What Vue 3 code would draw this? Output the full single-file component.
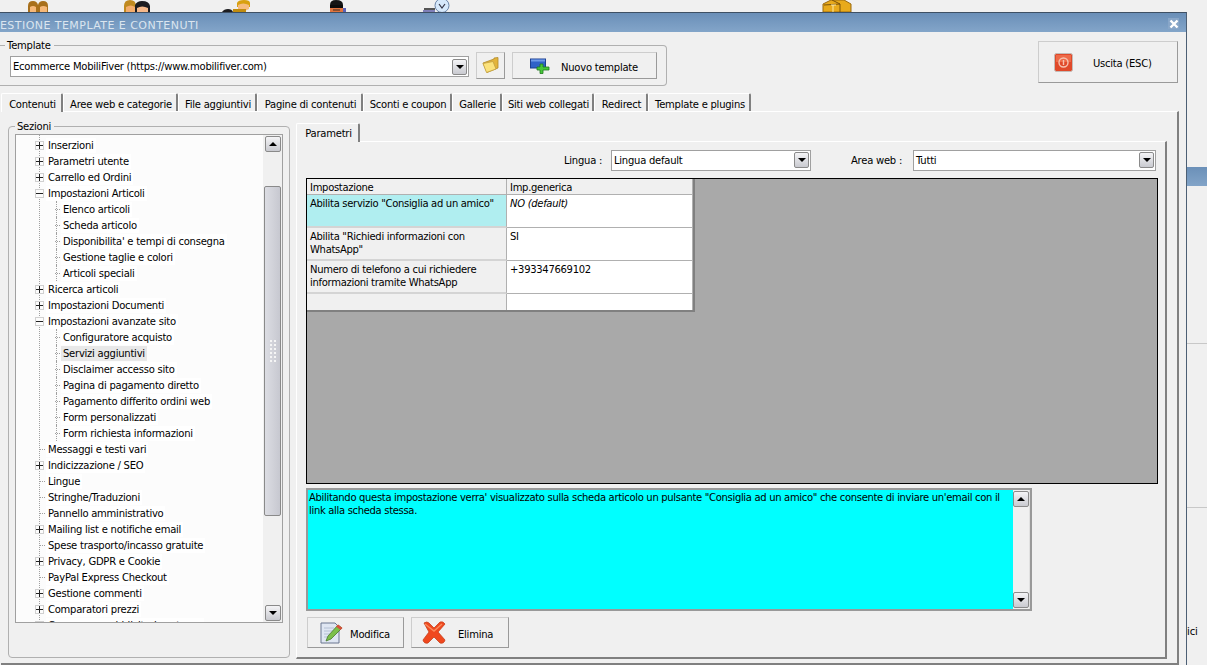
<template>
  <div class="desktop">
    <!-- pezzi dell'applicazione dietro la finestra -->
    <div class="behind-bar"></div>
    <div class="behind-line line-a"></div>
    <div class="behind-line line-b"></div>
    <span class="behind-text">nici</span>

    <svg class="top-icon" style="left:27px" width="22" height="12" viewBox="0 0 22 12">
      <path d="M1 12 V6 Q1 1 6 1 Q10 1 11 5 Q12 1 16 1 Q21 1 21 6 V12 Z" fill="#a8701c" />
      <path d="M3 12 V7 Q6 5 9 7 V12 Z M13 12 V7 Q16 5 20 7 V12 Z" fill="#f6b878" />
    </svg>
    <svg class="top-icon" style="left:124px" width="26" height="12" viewBox="0 0 26 12">
      <path d="M0 12 V6 Q0 0 6 0 Q12 0 12 6 V12 Z" fill="#c08a20" />
      <path d="M2 12 V7 Q7 4 11 7 V12 Z" fill="#f4ad6c" />
      <path d="M11 12 V5 Q13 1 18 1 Q25 1 26 6 V12 Z" fill="#1c1c20" />
      <path d="M13 12 V8 Q18 5 24 8 V12 Z" fill="#f6b88a" />
    </svg>
    <svg class="top-icon" style="left:222px" width="28" height="12" viewBox="0 0 28 12">
      <path d="M15 7 V3 Q16 0 22 0 Q28 0 28 3 V7 Z" fill="#d8a010" />
      <path d="M16 9 V5 Q21 2 27 5 V9 Q22 12 16 9 Z" fill="#f6bc80" />
      <path d="M0 12 Q2 9 6 9 Q10 9 11 12 Z" fill="#1d1d20" />
      <rect x="11" y="9" width="13" height="3" fill="#c08c10" />
    </svg>
    <svg class="top-icon" style="left:329px" width="17" height="12" viewBox="0 0 17 12">
      <path d="M1 12 V5 H14 V12 Z" fill="#e0743e" />
      <path d="M1 5 Q1 0 7 0 Q14 0 14 5 Z" fill="#141414" />
      <rect x="1" y="5" width="13" height="3" fill="#0c0c0c" />
      <path d="M4 10 H11" stroke="#3a2a20" />
      <rect x="14" y="8" width="3" height="4" fill="#5a62b8" />
    </svg>
    <svg class="top-icon" style="left:423px" width="30" height="12" viewBox="0 0 30 12">
      <rect x="0" y="10" width="12" height="2" fill="#8080b8" />
      <rect x="1" y="8" width="11" height="2" fill="#555" />
      <circle cx="19" cy="5.5" r="7" fill="#d6e8fa" stroke="#6a84a8" />
      <path d="M16 4 L19 8 L22 4" fill="none" stroke="#334" stroke-width="1.2" />
    </svg>
    <svg class="top-icon" style="left:822px" width="30" height="12" viewBox="0 0 30 12">
      <path d="M1 4 L9 0 H22 L29 4 V12 H1 Z" fill="#e8aa1c" stroke="#9a6a10" />
      <path d="M10 0 L18 4 V12 M18 4 L2 5" fill="none" stroke="#7a5208" />
      <path d="M9 5 H14 M11 5 V12" stroke="#fbe9a8" fill="none" />
    </svg>

    <div class="window">
      <div class="titlebar">
        <span class="title">GESTIONE TEMPLATE E CONTENUTI</span>
        <span class="close">
          <svg width="10" height="10" viewBox="0 0 10 10">
            <path d="M1.5 1.5 L8.5 8.5 M8.5 1.5 L1.5 8.5" stroke="#fff" stroke-width="2.4" />
          </svg>
        </span>
      </div>

      <div class="body">
        <div class="top-row">
          <fieldset class="group template-group">
            <legend><span>Template</span></legend>
            <div class="select template-select">
              <span>Ecommerce MobiliFiver (https://www.mobilifiver.com)</span>
              <span class="arrow-btn"><i class="tri down"></i></span>
            </div>
            <button class="btn folder-btn">
              <svg width="18" height="17" viewBox="0 0 18 17">
                <path d="M1 6 L12 2 L12 1 L16 0.5 L16 11 L5 15.5 Z" fill="#e3b43a" stroke="#b08a2c" stroke-width="0.8" />
                <path d="M1 6.5 L11 4.5 L14 12 L4.5 15.5 Z" fill="#fbe27c" stroke="#c2a040" stroke-width="0.8" />
              </svg>
            </button>
            <button class="btn new-btn">
              <svg width="20" height="16" viewBox="0 0 20 16">
                <rect x="0.5" y="1" width="15" height="9" fill="#2f62c8" stroke="#1d3f90" />
                <rect x="1" y="1.5" width="14" height="2" fill="#6f9ae8" />
                <path d="M10 6 H13 V9 H19 V12 H13 V15.5 H10 V12 H7 V9 H10 Z" fill="#46c83a" stroke="#1f7a1c" stroke-width="0.8" />
              </svg>
              <span>Nuovo template</span>
            </button>
          </fieldset>
          <button class="btn exit-btn">
            <svg width="19" height="19" viewBox="0 0 19 19">
              <rect x="0.5" y="0.5" width="18" height="18" rx="2" fill="#e0492a" stroke="#c2bcb8" />
              <rect x="2" y="2" width="15" height="7" fill="#ee6a48" />
              <circle cx="9.5" cy="9.5" r="4.5" fill="none" stroke="#f6c2b0" stroke-width="1.4" />
              <path d="M9.5 7 V12" stroke="#f6c2b0" stroke-width="1.4" />
            </svg>
            <span>Uscita (ESC)</span>
          </button>
        </div>

        <div class="tabs">
          <div
            v-for="(t, i) in mainTabs"
            :key="t.label"
            class="tab"
            :class="{ active: i === 0 }"
            :style="{ width: t.w + 'px' }"
          >{{ t.label }}</div>
        </div>

        <div class="main-panel">
          <fieldset class="group sections">
            <legend><span>Sezioni</span></legend>
            <div class="tree">
              <div class="tree-rows">
                <div class="tree-guide"></div>
                <div
                  v-for="row in treeRows"
                  :key="row.label"
                  class="tree-row"
                  :class="{ child: row.child }"
                >
                  <svg v-if="row.icon" class="expander" width="9" height="9" viewBox="0 0 9 9">
                    <rect x="0.5" y="0.5" width="8" height="8" fill="#fcfcfc" stroke="#d0d0d0" />
                    <path d="M1 4.5 H8" stroke="#222" />
                    <path v-if="row.icon === 'plus'" d="M4.5 1 V8" stroke="#222" />
                  </svg>
                  <span v-else class="dash"></span>
                  <span class="tree-text" :class="{ selected: row.selected }">{{ row.label }}</span>
                </div>
              </div>
              <div class="scrollbar tree-scroll">
                <span class="arrow-btn"><i class="tri up"></i></span>
                <div class="track">
                  <div class="thumb"><span class="grip"></span></div>
                </div>
                <span class="arrow-btn"><i class="tri down"></i></span>
              </div>
            </div>
          </fieldset>

          <div class="right-side">
            <div class="tab param-tab active">Parametri</div>
            <div class="param-panel">
              <div class="filters">
                <span class="filter-label lang-label">Lingua :</span>
                <div class="select lang-select">
                  <span>Lingua default</span>
                  <span class="arrow-btn"><i class="tri down"></i></span>
                </div>
                <span class="filter-label area-label">Area web :</span>
                <div class="select area-select">
                  <span>Tutti</span>
                  <span class="arrow-btn"><i class="tri down"></i></span>
                </div>
              </div>

              <div class="grid-area">
                <div class="grid">
                  <div class="cell head">Impostazione</div>
                  <div class="cell head">Imp.generica</div>
                  <template v-for="row in settings" :key="row.name">
                    <div class="cell name" :class="{ current: row.current }">{{ row.name }}</div>
                    <div class="cell value" :class="{ italic: row.italic }">{{ row.value }}</div>
                  </template>
                  <div class="cell name last"></div>
                  <div class="cell value last"></div>
                </div>
              </div>

              <div class="memo">
                <p>Abilitando questa impostazione verra' visualizzato sulla scheda articolo un pulsante "Consiglia ad un amico" che consente di inviare un'email con il link alla scheda stessa.</p>
                <div class="scrollbar memo-scroll">
                  <span class="arrow-btn"><i class="tri up"></i></span>
                  <div class="track"></div>
                  <span class="arrow-btn"><i class="tri down"></i></span>
                </div>
              </div>

              <div class="actions">
                <button class="btn action-btn edit-btn">
                  <svg width="23" height="23" viewBox="0 0 23 23">
                    <path d="M1 2 H15 L19 6 V22 H1 Z" fill="#dfe6f2" stroke="#6a7690" />
                    <path d="M4 7 H14 M4 10 H14 M4 13 H10 M4 16 H8" stroke="#b4c0d4" />
                    <path d="M18 4 L22 7 L11 18 L6 20 L8 15 Z" fill="#7cc04a" stroke="#477a2a" stroke-width="0.8" />
                    <path d="M18 3.5 L22.5 7 L20.5 9 L16 5.5 Z" fill="#d8503c" />
                  </svg>
                  <span>Modifica</span>
                </button>
                <button class="btn action-btn del-btn">
                  <svg width="24" height="23" viewBox="0 0 24 23">
                    <path d="M2 2 Q5 0 7 2 L12 7 L18 1 Q21 0 23 3 L16 11 L23 19 Q22 23 18 22 L12 16 L6 22 Q2 23 1 19 L7 11 Z" fill="#f0481e" stroke="#c8401c" stroke-width="0.8" />
                    <path d="M3 3 L12 10 L20 3" fill="none" stroke="#fb8a5c" stroke-width="1.5" />
                  </svg>
                  <span>Elimina</span>
                </button>
              </div>
            </div>
          </div>
        </div>
      </div>
    </div>
  </div>
</template>

<script setup>
const mainTabs = [
  { label: "Contenuti", w: 62 },
  { label: "Aree web e categorie", w: 115 },
  { label: "File aggiuntivi", w: 79 },
  { label: "Pagine di contenuti", w: 106 },
  { label: "Sconti e coupon", w: 89 },
  { label: "Gallerie", w: 50 },
  { label: "Siti web collegati", w: 92 },
  { label: "Redirect", w: 54 },
  { label: "Template e plugins", w: 103 }
];

const treeRows = [
  { label: "Inserzioni", icon: "plus" },
  { label: "Parametri utente", icon: "plus" },
  { label: "Carrello ed Ordini", icon: "plus" },
  { label: "Impostazioni Articoli", icon: "minus" },
  { label: "Elenco articoli", child: true },
  { label: "Scheda articolo", child: true },
  { label: "Disponibilita' e tempi di consegna", child: true },
  { label: "Gestione taglie e colori", child: true },
  { label: "Articoli speciali", child: true },
  { label: "Ricerca articoli", icon: "plus" },
  { label: "Impostazioni Documenti", icon: "plus" },
  { label: "Impostazioni avanzate sito", icon: "minus" },
  { label: "Configuratore acquisto", child: true },
  { label: "Servizi aggiuntivi", child: true, selected: true },
  { label: "Disclaimer accesso sito", child: true },
  { label: "Pagina di pagamento diretto", child: true },
  { label: "Pagamento differito ordini web", child: true },
  { label: "Form personalizzati", child: true },
  { label: "Form richiesta informazioni", child: true },
  { label: "Messaggi e testi vari" },
  { label: "Indicizzazione / SEO", icon: "plus" },
  { label: "Lingue" },
  { label: "Stringhe/Traduzioni" },
  { label: "Pannello amministrativo" },
  { label: "Mailing list e notifiche email", icon: "plus" },
  { label: "Spese trasporto/incasso gratuite" },
  { label: "Privacy, GDPR e Cookie", icon: "plus" },
  { label: "PayPal Express Checkout" },
  { label: "Gestione commenti", icon: "plus" },
  { label: "Comparatori prezzi", icon: "plus" },
  { label: "Campagne pubblicitarie esterne", icon: "plus" }
];

const settings = [
  { name: 'Abilita servizio "Consiglia ad un amico"', value: "NO (default)", current: true, italic: true },
  { name: 'Abilita "Richiedi informazioni con WhatsApp"', value: "SI" },
  { name: "Numero di telefono a cui richiedere informazioni tramite WhatsApp", value: "+393347669102" }
];
</script>

<style>
html, body {
  margin: 0;
  background: #f0f0f0;
  overflow: hidden;
}
</style>

<style scoped>
.desktop {
  position: relative;
  width: 1207px;
  height: 665px;
  overflow: hidden;
  background: #f0f0f0;
  font-family: "DejaVu Sans", sans-serif;
  font-size: 10px;
  letter-spacing: -0.24px;
  color: #000;
}

.top-icon {
  position: absolute;
  top: 0;
}

.behind-bar {
  position: absolute;
  left: 1187px;
  top: 167px;
  width: 20px;
  height: 19px;
  background: linear-gradient(#6b90b8, #82a4c8);
}

.behind-line {
  position: absolute;
  left: 1187px;
  width: 20px;
  height: 1px;
  background: #c8c8c8;
}

.line-a {
  top: 343px;
}

.line-b {
  top: 507px;
}

.behind-text {
  position: absolute;
  left: 1181px;
  top: 625px;
  line-height: 14px;
}

.window {
  position: absolute;
  left: -10px;
  top: 12px;
  width: 1197px;
  height: 654px;
  box-sizing: border-box;
  border: 1px solid #4c5f74;
  border-top-color: #3e5064;
  background: #f0f0f0;
  display: flex;
  flex-direction: column;
}

.titlebar {
  height: 19px;
  flex: none;
  display: flex;
  align-items: center;
  justify-content: space-between;
  padding: 0 7px 0 0;
  background: linear-gradient(#6a8fb8, #83a5c9);
}

.title {
  color: #dbe5ef;
  font-size: 11px;
  letter-spacing: 0.45px;
  line-height: 13px;
  margin-top: 6px;
}

.close {
  width: 11px;
  height: 11px;
  margin-top: 2px;
  display: flex;
  align-items: center;
  justify-content: center;
  background: #88a6c8;
}

.body {
  flex: 1;
  display: flex;
  flex-direction: column;
  padding-left: 10px;
  min-height: 0;
}

.top-row {
  box-sizing: border-box;
  height: 61px;
  flex: none;
  display: flex;
  justify-content: space-between;
  align-items: flex-start;
  padding: 9px 8px 0 0;
}

.group {
  margin: 0;
  min-width: 0;
  border: 1px solid #b0b0b0;
  border-radius: 4px;
  box-sizing: border-box;
}

.group legend {
  padding: 0 3px 0 2px;
  line-height: 12px;
}

.group legend span {
  position: relative;
  top: 1px;
}

.template-group {
  width: 667px;
  height: 47px;
  margin: -2px 0 0 -1px;
  padding: 0 0 0 10px;
  display: flex;
  align-items: flex-start;
  gap: 7px;
  border-left: none;
  border-top-left-radius: 0;
  border-bottom-left-radius: 0;
}

.template-group legend {
  margin-left: -5px;
}

.select {
  box-sizing: border-box;
  display: flex;
  align-items: center;
  justify-content: space-between;
  background: #fff;
  border: 1px solid #a0a0a0;
  padding: 0 1px 0 2px;
  height: 21px;
}

.template-select {
  width: 459px;
  margin-top: 5px;
}

.arrow-btn {
  box-sizing: border-box;
  flex: none;
  width: 15px;
  height: 16px;
  display: flex;
  align-items: center;
  justify-content: center;
  border: 1px solid #8a8a8a;
  border-radius: 2px;
  background: linear-gradient(#f4f4f6, #c9cad0);
}

.tri {
  width: 0;
  height: 0;
  border-left: 4px solid transparent;
  border-right: 4px solid transparent;
}

.tri.down {
  border-top: 4px solid #000;
}

.tri.up {
  border-bottom: 4px solid #000;
}

.btn {
  box-sizing: border-box;
  font: inherit;
  letter-spacing: inherit;
  color: #000;
  background: #f0f0f0;
  border: 1px solid #cdcdcd;
  border-right-color: #9a9a9a;
  border-bottom-color: #9a9a9a;
  padding: 0;
  display: flex;
  align-items: center;
}

.btn span {
  padding-top: 3px;
}

.folder-btn {
  width: 29px;
  height: 27px;
  margin-top: 1px;
  justify-content: center;
}

.new-btn {
  width: 145px;
  height: 27px;
  margin-top: 1px;
  padding-left: 17px;
  gap: 11px;
}

.exit-btn {
  width: 140px;
  height: 42px;
  padding-left: 15px;
  gap: 20px;
}

.exit-btn span {
  padding-top: 2px;
}

.tabs {
  height: 18px;
  flex: none;
  display: flex;
  align-items: flex-end;
}

.tab {
  box-sizing: border-box;
  height: 18px;
  line-height: 22px;
  padding-left: 2px;
  text-align: center;
  white-space: nowrap;
  border-top: 1px solid #fff;
  border-left: 1px solid #fff;
  border-right: 2px solid #808080;
  border-radius: 2px 2px 0 0;
}

.tab.active {
  height: 19px;
  margin-bottom: -1px;
  position: relative;
  z-index: 1;
  background: #f0f0f0;
}

.main-panel {
  width: 1178px;
  flex: 1;
  min-height: 0;
  box-sizing: border-box;
  border-top: 1px solid #fff;
  border-right: 2px solid #808080;
  border-bottom: 2px solid #808080;
  display: flex;
  align-items: flex-start;
  padding: 8px 0 0 7px;
  gap: 6px;
}

.sections {
  width: 282px;
  height: 538px;
  padding: 0 6px;
}

.tree {
  box-sizing: border-box;
  height: 489px;
  margin-top: 2px;
  border: 1px solid #a0a0a0;
  background: #fcfcfc;
  display: flex;
  overflow: hidden;
}

.tree-rows {
  position: relative;
  flex: 1;
  padding-top: 2px;
  overflow: hidden;
}

.tree-guide {
  position: absolute;
  left: 23px;
  top: 0;
  bottom: 0;
  border-left: 1px dotted #a0a0a0;
}

.tree-row {
  position: relative;
  height: 16px;
  display: flex;
  align-items: center;
  padding-left: 19px;
}

.tree-row.child {
  padding-left: 34px;
}

.tree-row.child::before {
  content: "";
  position: absolute;
  left: 40px;
  top: 0;
  height: 16px;
  border-left: 1px dotted #a0a0a0;
}

.expander {
  position: relative;
  z-index: 1;
  flex: none;
  margin-right: 2px;
}

.dash {
  width: 11px;
  flex: none;
  margin-left: 5px;
  margin-right: -5px;
  border-top: 1px dotted #a0a0a0;
}

.tree-text {
  position: relative;
  background: #fff;
  padding: 0 2px;
  line-height: 15px;
  white-space: nowrap;
}

.tree-text.selected {
  background: #e8e8e8;
}

.scrollbar {
  box-sizing: border-box;
  width: 19px;
  flex: none;
  display: flex;
  flex-direction: column;
  align-items: center;
  padding: 1px 0;
}

.track {
  flex: 1;
  width: 100%;
}

.tree-scroll {
  background: #f0f0f0;
  padding: 1px 0;
}

.tree-scroll .track {
  padding-top: 34px;
  box-sizing: border-box;
  display: flex;
  justify-content: center;
}

.tree-scroll .arrow-btn,
.memo-scroll .arrow-btn {
  width: 16px;
  height: 16px;
}

.thumb {
  box-sizing: border-box;
  width: 17px;
  height: 330px;
  border: 1px solid #8a8a8a;
  border-radius: 2px;
  background: linear-gradient(90deg, #dcdde3, #c7c8d0);
  display: flex;
  align-items: center;
  justify-content: center;
}

.grip {
  width: 7px;
  height: 25px;
  background-image: radial-gradient(#f5f5f5 1px, transparent 1.2px);
  background-size: 4px 4px;
}

.right-side {
  width: 871px;
  display: flex;
  flex-direction: column;
  padding-top: 3px;
}

.param-tab {
  width: 64px;
  margin-left: 0;
  line-height: 20px;
}

.param-panel {
  box-sizing: border-box;
  height: 518px;
  border-top: 1px solid #fff;
  border-left: 1px solid #fff;
  border-right: 2px solid #808080;
  border-bottom: 2px solid #808080;
  padding: 8px 0 0 9px;
  display: flex;
  flex-direction: column;
}

.filters {
  height: 20px;
  display: flex;
  align-items: center;
  flex: none;
}

.filter-label {
  white-space: nowrap;
}

.lang-label {
  margin-left: 258px;
  width: 47px;
}

.lang-select {
  width: 200px;
}

.area-label {
  margin-left: 40px;
  width: 62px;
}

.area-select {
  width: 243px;
}

.grid-area {
  box-sizing: border-box;
  width: 852px;
  height: 306px;
  margin-top: 8px;
  flex: none;
  background: #a9a9a9;
  border: 1px solid #000;
}

.grid {
  display: grid;
  grid-template-columns: 200px 186px;
  grid-template-rows: 16px 33px 33px 33px 16px;
  width: max-content;
  background: #fff;
  border-right: 2px solid #808080;
  border-bottom: 2px solid #808080;
}

.cell {
  box-sizing: border-box;
  padding: 2px 0 0 3px;
  line-height: 13px;
  border-right: 1px solid #b0b0b0;
  border-bottom: 1px solid #b0b0b0;
  overflow: hidden;
  letter-spacing: -0.3px;
}

.head {
  background: #f0f0f0;
}

.name {
  background: #f0f0f0;
  padding-right: 2px;
  border-bottom: 2px solid #d4d4d4;
}

.name.current {
  background: #b0eef0;
}

.value {
  background: #fff;
}

.value.italic {
  font-style: italic;
}

.last {
  border-bottom: none;
}

.memo {
  box-sizing: border-box;
  width: 726px;
  height: 123px;
  margin-top: 4px;
  flex: none;
  display: flex;
  background: #00ffff;
  border: 2px solid #999;
}

.memo p {
  flex: 1;
  margin: 0;
  padding: 1px 0 0 1px;
  line-height: 13px;
  letter-spacing: -0.32px;
}

.memo-scroll {
  background: #f0f0f0;
  border-right: 1px solid #e0e0e0;
  width: 17px;
}

.actions {
  display: flex;
  gap: 7px;
  margin-top: 6px;
  margin-left: 1px;
}

.action-btn {
  height: 31px;
  padding-left: 12px;
}

.edit-btn {
  width: 97px;
  gap: 7px;
}

.del-btn {
  width: 98px;
  padding-left: 10px;
  gap: 12px;
}
</style>
